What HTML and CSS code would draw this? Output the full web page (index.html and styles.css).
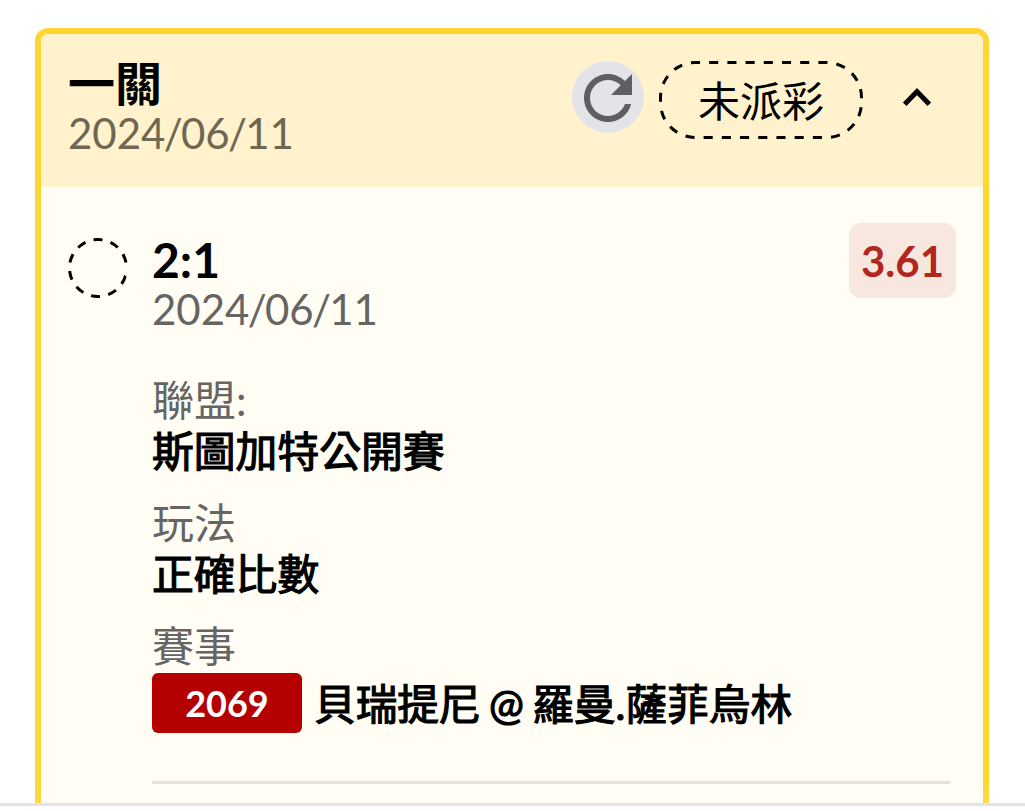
FILE: index.html
```
<!DOCTYPE html>
<html lang="zh-Hant">
<head>
    <meta charset="UTF-8">
    <meta name="viewport" content="width=device-width, initial-scale=1.0">
    <title>一關</title>
    <link rel="stylesheet" href="styles.css">
</head>
<body>
    <div class="list">
        <div class="card">
            <div class="card-header">
                <div class="heading">
                    <h1>一關</h1>
                    <p class="date">2024<span>/</span>06<span>/</span>11</p>
                </div>
                <button class="refresh-btn" aria-label="refresh">
                    <svg width="72" height="72" viewBox="0 0 72 72">
                        <path transform="translate(0 1) scale(3)" fill="#5e5f61" d="M17.65 6.35C16.2 4.9 14.21 4 12 4c-4.42 0-7.99 3.58-7.99 8s3.57 8 7.99 8c3.73 0 6.84-2.55 7.73-6h-2.08c-.82 2.33-3.04 4-5.65 4-3.31 0-6-2.69-6-6s2.69-6 6-6c1.66 0 3.14.69 4.22 1.78L13 11h7V4l-2.35 2.35z"/>
                    </svg>
                </button>
                <div class="status">
                    <svg class="outline" width="204" height="78" viewBox="0 0 204 78">
                        <rect x="1.5" y="1.5" width="201" height="75" rx="35" fill="none" stroke="#000" stroke-width="3" pathLength="486" stroke-dasharray="9 9" stroke-dashoffset="4.5"/>
                    </svg>
                    <span>未派彩</span>
                </div>
                <button class="toggle-btn" aria-label="toggle">
                    <svg width="30" height="20" viewBox="0 0 30 20">
                        <path d="M2.7 17.2L15 4.6L27.3 17.2" fill="none" stroke="#000" stroke-width="5"/>
                    </svg>
                </button>
            </div>
            <div class="bet">
                <svg class="ring" width="60" height="60" viewBox="0 0 60 60">
                    <circle cx="30" cy="30" r="28.5" transform="rotate(16 30 30)" fill="none" stroke="#000" stroke-width="3" pathLength="360" stroke-dasharray="18 17 18 17 18 17 18 17 18 17 18 17 18 17 18 17 18 17 18 27"/>
                </svg>
                <div class="bet-body">
                    <div class="bet-top">
                        <div>
                            <h2>2:1</h2>
                            <p class="date">2024<span>/</span>06<span>/</span>11</p>
                        </div>
                        <span class="odds">3.61</span>
                    </div>
                    <dl>
                        <dt>聯盟:</dt>
                        <dd>斯圖加特公開賽</dd>
                        <dt>玩法</dt>
                        <dd>正確比數</dd>
                        <dt>賽事</dt>
                        <dd class="match">
                            <span class="match-no">2069</span>
                            <span class="teams">貝瑞提尼 @ 羅曼.薩菲烏林</span>
                        </dd>
                    </dl>
                    <hr>
                </div>
            </div>
        </div>
    </div>
    <div class="footer"></div>
</body>
</html>
```
FILE: styles.css
```
* {
    box-sizing: border-box;
}
body {
    margin: 0;
    height: 811px;
    overflow: hidden;
    background: #fff;
    color: #000;
    font-family: Lato, "Noto Sans CJK TC", sans-serif;
    font-size: 42px;
}
h1, h2, p, dl, dd {
    margin: 0;
}
button {
    padding: 0;
    border: none;
    background: none;
}
svg {
    display: block;
}
.list {
    height: 803px;
    padding: 28px 36px 0 35px;
    overflow: hidden;
}
.card {
    height: 820px;
    border: 6px solid #fdd631;
    border-radius: 13px;
    background: #fffdf4;
    overflow: hidden;
}
.card-header {
    display: flex;
    align-items: flex-start;
    height: 153px;
    padding: 27px 51px 0 28px;
    background: #fff2cc;
}
.heading {
    flex: 1;
    margin: -3px 0 0 -1px;
}
h1 {
    font-size: 47px;
    line-height: 50px;
    font-weight: 700;
}
h2 {
    font-size: 48px;
    line-height: 48px;
    font-weight: 700;
}
.date {
    line-height: 50px;
    color: #666563;
}
.date span {
    margin: 0 -1.75px;
}
.card-header .date {
    color: #6e6753;
}
.refresh-btn {
    width: 72px;
    height: 72px;
    border-radius: 50%;
    background: #e3e4e8;
}
.status {
    position: relative;
    width: 204px;
    height: 78px;
    margin-left: 15px;
    line-height: 80px;
    text-align: center;
}
.outline {
    position: absolute;
    top: 0;
    left: 0;
}
.toggle-btn {
    margin: 26px 0 0 39px;
}
.bet {
    display: flex;
    padding: 36px 27px 0;
}
.ring {
    margin: 15px 24px 0 0;
}
.bet-body {
    flex: 1;
}
.bet-top {
    display: flex;
    justify-content: space-between;
    height: 152px;
}
.bet-top h2 {
    margin-top: 13px;
}
.odds {
    width: 107px;
    height: 75px;
    border-radius: 12px;
    background: #f8e7df;
    color: #b3261e;
    font-weight: 700;
    line-height: 77px;
    text-align: center;
}
dt {
    line-height: 51px;
    color: #666563;
}
/* medium weight: regular thickened a little */
dd {
    margin-bottom: 21px;
    font-size: 41.8px;
    line-height: 51px;
    -webkit-text-stroke: 1.2px #000;
}
.match {
    display: flex;
    align-items: center;
    height: 60px;
    margin: 1px 0 0;
    white-space: nowrap;
}
.match-no {
    width: 150px;
    height: 60px;
    margin-right: 12px;
    border-radius: 6px;
    background: #b50000;
    color: #fff;
    font-size: 36px;
    font-weight: 700;
    line-height: 60px;
    text-align: center;
    -webkit-text-stroke: 0;
}
.teams {
    padding-top: 2px;
    font-size: 41.7px;
    word-spacing: -2.4px;
}
hr {
    height: 3px;
    margin: 48px 6px 0 0;
    border: none;
    background: #e5e2db;
}
.footer {
    position: relative;
    height: 8px;
    border-top: 3px solid #e4e4e4;
    background: #fff;
    box-shadow: 0 -2px 24px rgba(255, 255, 255, 0.4);
}
```
